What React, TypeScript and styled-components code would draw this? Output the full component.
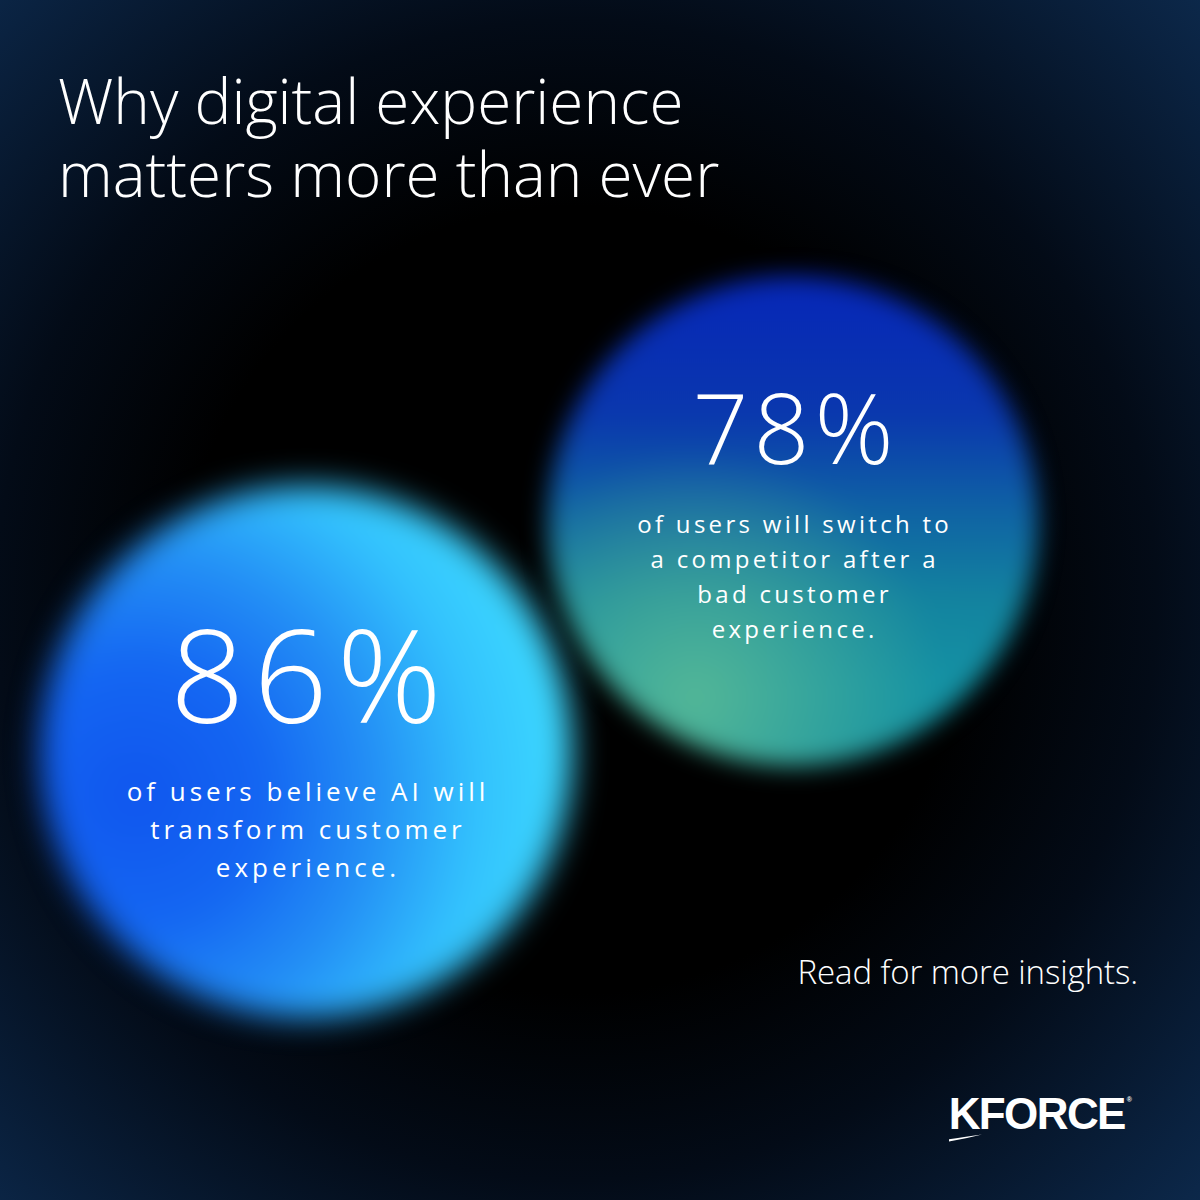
import React from "react";
import styled, { createGlobalStyle } from "styled-components";

const GlobalStyle = createGlobalStyle`
  html, body {
    margin: 0;
    padding: 0;
    background: #000;
  }
  * {
    box-sizing: border-box;
  }
`;

const Page = styled.div`
  width: 1200px;
  height: 1200px;
  overflow: hidden;
  display: flex;
  flex-direction: column;
  padding: 64px 62px 0 58px;
  color: #fff;
  font-family: "Open Sans", "Noto Sans", sans-serif;
  background:
    radial-gradient(ellipse 78% 78% at 48% 50%, #000 42%, #030b17 62%, #0a2240 86%, #0f2f55 100%);
`;

const Title = styled.h1`
  margin: 0;
  font-size: 62px;
  line-height: 73px;
  font-weight: 300;
  letter-spacing: 0;
`;

const Stage = styled.div`
  display: flex;
  align-items: flex-start;
  height: 742px;
`;

interface BubbleProps {
  size: number;
  top: number;
  shift: number;
  paint: string;
  soft: number;
  pad: number;
}

const Bubble = styled.div<BubbleProps>`
  position: relative;
  flex: none;
  width: ${(p) => p.size}px;
  height: ${(p) => p.size}px;
  margin-top: ${(p) => p.top}px;
  margin-left: ${(p) => p.shift}px;
  padding-top: ${(p) => p.pad}px;
  display: flex;
  flex-direction: column;
  align-items: center;

  &::before {
    content: "";
    position: absolute;
    inset: 0;
    border-radius: 50%;
    background: ${(p) => p.paint};
    filter: blur(${(p) => p.soft}px);
    z-index: 0;
  }
`;

const Figure = styled.div<{ size: number; track: number }>`
  position: relative;
  font-size: ${(p) => p.size}px;
  line-height: 1;
  font-weight: 300;
  letter-spacing: ${(p) => p.track}px;
  margin-right: ${(p) => -p.track}px;
`;

const Caption = styled.p<{ size: number; lead: number; gap: number; track: number }>`
  position: relative;
  margin: ${(p) => p.gap}px ${(p) => -p.track}px 0 0;
  font-size: ${(p) => p.size}px;
  line-height: ${(p) => p.lead}px;
  letter-spacing: ${(p) => p.track}px;
  font-weight: 400;
  text-align: center;
`;

const Footer = styled.div`
  display: flex;
  flex-direction: column;
  align-items: flex-end;
  gap: 100px;
`;

const Cta = styled.div`
  font-size: 33px;
  line-height: 40px;
  font-weight: 300;
  letter-spacing: -0.1px;
`;

const Logo = styled.div`
  position: relative;
  margin-right: 6px;
  font-family: "Liberation Sans", Arial, sans-serif;
  font-weight: 700;
  font-size: 44px;
  line-height: 44px;
  letter-spacing: -1.6px;
  display: flex;
  align-items: flex-start;
`;

const Mark = styled.span`
  font-size: 7px;
  line-height: 7px;
  letter-spacing: 0;
  margin: 4px 0 0 2px;
`;

const Swoosh = styled.svg`
  position: absolute;
  left: 0;
  bottom: -6px;
`;

const leftPaint =
  "radial-gradient(circle at 18% 58%, #1056ee 0%, #1466f2 24%, #238ef5 44%, #33c2fd 64%, #3edcff 84%, #44e2ff 100%)";

const rightPaint =
  "radial-gradient(circle at 30% 86%, rgba(86,184,150,0.95) 0%, rgba(86,184,150,0) 46%), linear-gradient(180deg, #0626b8 0%, #0a37ae 28%, #0f63a4 48%, #13839f 66%, #1492a4 84%, #1390a2 100%)";

export default function App() {
  return (
    <Page>
      <GlobalStyle />
      <Title>
        Why digital experience
        <br />
        matters more than ever
      </Title>
      <Stage>
        <Bubble size={532} top={276} shift={-18} paint={leftPaint} soft={16} pad={122}>
          <Figure size={130} track={9}>86%</Figure>
          <Caption size={26} lead={38} gap={34} track={4}>
            of users believe AI will
            <br />
            transform customer
            <br />
            experience.
          </Caption>
        </Bubble>
        <Bubble size={490} top={66} shift={-24} paint={rightPaint} soft={12} pad={101}>
          <Figure size={98} track={5}>78%</Figure>
          <Caption size={24} lead={35} gap={31} track={3.3}>
            of users will switch to
            <br />
            a competitor after a
            <br />
            bad customer
            <br />
            experience.
          </Caption>
        </Bubble>
      </Stage>
      <Footer>
        <Cta>Read for more insights.</Cta>
        <Logo>
          KFORCE
          <Mark>®</Mark>
          <Swoosh width="34" height="8" viewBox="0 0 34 8">
            <path d="M0 7.5 L0 5.2 Q14 3.4 33 0.6 Q16 5 0 7.5 Z" fill="#fff" />
          </Swoosh>
        </Logo>
      </Footer>
    </Page>
  );
}
